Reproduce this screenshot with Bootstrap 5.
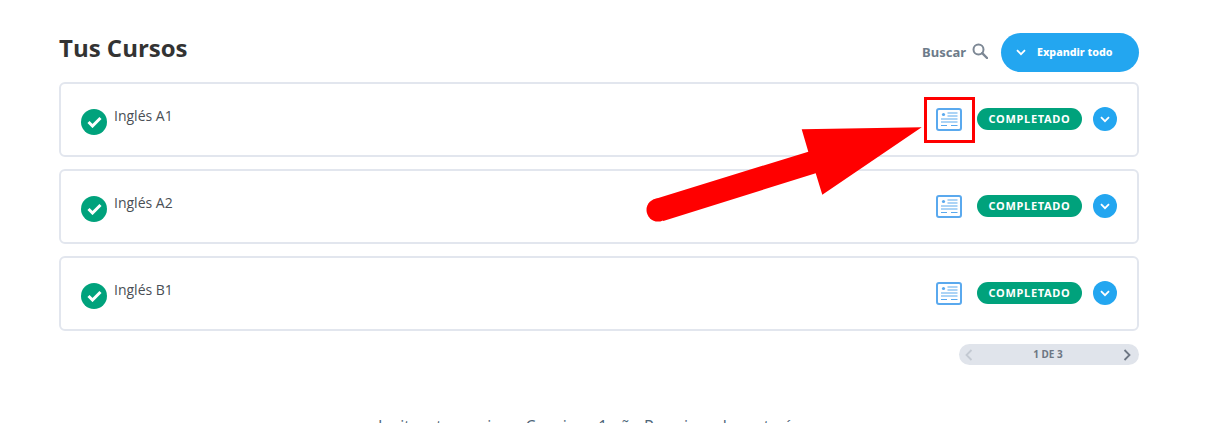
<!DOCTYPE html>
<html lang="es">
<head>
    <meta charset="UTF-8">
    <meta name="viewport" content="width=device-width, initial-scale=1.0">
    <title>Tus Cursos</title>
    <link href="https://cdn.jsdelivr.net/npm/bootstrap@5.3.0/dist/css/bootstrap.min.css" rel="stylesheet">
    <style>
        html, body {
            height: 423px;
            overflow: hidden;
        }

        body {
            background-color: #fff;
            font-family: "Open Sans", sans-serif;
            color: #4a4f55;
        }

        .page-wrap {
            width: 1080px;
            margin-left: 59px;
            padding-top: 33px;
        }

        .header-line {
            margin-bottom: 10px;
        }

        .courses-title {
            font-size: 24px;
            font-weight: 700;
            color: #333;
            line-height: 32px;
            margin: -1px 0 0;
        }

        .search-label {
            font-family: "Noto Sans", sans-serif;
            font-size: 13px;
            font-weight: 700;
            color: #6d7b8a;
        }

        .search-icon {
            margin: 0 13px 4px 6px;
        }

        .expand-btn {
            width: 138px;
            height: 39px;
            border: 0;
            border-radius: 20px;
            background-color: #23a6f0;
            color: #fff;
            font-family: "Noto Sans", sans-serif;
            font-size: 10.7px;
            font-weight: 800;
            padding: 0 0 0 15px;
        }

        .expand-btn svg {
            margin-right: 11px;
        }

        .course-row {
            height: 75px;
            border: 2px solid #e2e6ee;
            border-radius: 6px;
            padding: 0 20px;
        }

        .course-row + .course-row {
            margin-top: 12px;
        }

        .course-check {
            width: 26px;
            height: 26px;
            border-radius: 50%;
            background-color: #00a27c;
            margin-top: 5px;
        }

        .course-name {
            font-size: 14px;
            line-height: 20px;
            margin-left: 7px;
            margin-top: -7px;
        }

        .course-actions {
            margin-bottom: 1px;
        }

        .status-pill {
            width: 105px;
            height: 22px;
            border-radius: 11px;
            background-color: #00a27c;
            color: #fff;
            font-family: "Noto Sans", sans-serif;
            font-size: 11px;
            font-weight: 700;
            letter-spacing: .7px;
            margin-left: 15px;
        }

        .row-toggle {
            width: 24px;
            height: 24px;
            border-radius: 50%;
            background-color: #23a6f0;
            margin-left: 11px;
        }

        .pager-bar {
            width: 180px;
            height: 21px;
            border-radius: 11px;
            background-color: #e0e4eb;
            margin-top: 13px;
            padding: 0 8px 0 6px;
            font-family: "Noto Sans", sans-serif;
            font-size: 10px;
            font-weight: 700;
            color: #6d7683;
        }

        .footer-line {
            margin-top: 49px;
            font-size: 16px;
            line-height: 24px;
            color: #4d6478;
            text-align: center;
            white-space: nowrap;
        }

        .red-box {
            position: absolute;
            left: 924px;
            top: 97px;
            width: 51px;
            height: 46px;
            border: 3px solid #f00;
        }

        .red-arrow {
            position: absolute;
            left: 0;
            top: 0;
            pointer-events: none;
        }
    </style>
</head>
<body>
    <div class="page-wrap">
        <div class="d-flex align-items-start justify-content-between header-line">
            <h1 class="courses-title">Tus Cursos</h1>
            <div class="d-flex align-items-center">
                <span class="search-label">Buscar</span>
                <svg width="16" height="16" viewBox="0 0 16 16" fill="none" stroke="#7d8895" stroke-width="2" class="search-icon">
                    <circle cx="6.5" cy="6.5" r="5"/>
                    <path d="M10.2 10.2 15 15" stroke-linecap="round" stroke-width="2.4"/>
                </svg>
                <button class="expand-btn d-flex align-items-center" type="button">
                    <svg width="10" height="7" viewBox="0 0 10 7" fill="none" stroke="#fff" stroke-width="1.8">
                        <path d="M1 1.2 5 5.2 9 1.2"/>
                    </svg>
                    Expandir todo
                </button>
            </div>
        </div>

        <div class="course-row d-flex align-items-center justify-content-between">
            <div class="d-flex align-items-center">
                <div class="course-check d-flex align-items-center justify-content-center">
                    <svg width="15" height="12" viewBox="0 0 15 12" fill="none" stroke="#fff" stroke-width="3"><path d="M1.5 6 5.5 10 13.5 2"/></svg>
                </div>
                <span class="course-name">Inglés A1</span>
            </div>
            <div class="course-actions d-flex align-items-center">
                <svg width="26" height="23" viewBox="0 0 26 23" fill="none" stroke="#5aa9ee">
                    <rect x="1" y="1" width="24" height="21" rx="2" stroke-width="2"/>
                    <circle cx="7.5" cy="6.5" r="1.6" fill="#5aa9ee" stroke="none"/>
                    <path d="M11.5 5H21.5M11.5 8H21.5M5 11H21.5M5 14H21.5M5 17.5H11M15 17.5H21.5" stroke-width="1.2"/>
                </svg>
                <span class="status-pill d-flex align-items-center justify-content-center">COMPLETADO</span>
                <div class="row-toggle d-flex align-items-center justify-content-center">
                    <svg width="10" height="7" viewBox="0 0 10 7" fill="none" stroke="#fff" stroke-width="1.8"><path d="M1 1.2 5 5.2 9 1.2"/></svg>
                </div>
            </div>
        </div>

        <div class="course-row d-flex align-items-center justify-content-between">
            <div class="d-flex align-items-center">
                <div class="course-check d-flex align-items-center justify-content-center">
                    <svg width="15" height="12" viewBox="0 0 15 12" fill="none" stroke="#fff" stroke-width="3"><path d="M1.5 6 5.5 10 13.5 2"/></svg>
                </div>
                <span class="course-name">Inglés A2</span>
            </div>
            <div class="course-actions d-flex align-items-center">
                <svg width="26" height="23" viewBox="0 0 26 23" fill="none" stroke="#5aa9ee">
                    <rect x="1" y="1" width="24" height="21" rx="2" stroke-width="2"/>
                    <circle cx="7.5" cy="6.5" r="1.6" fill="#5aa9ee" stroke="none"/>
                    <path d="M11.5 5H21.5M11.5 8H21.5M5 11H21.5M5 14H21.5M5 17.5H11M15 17.5H21.5" stroke-width="1.2"/>
                </svg>
                <span class="status-pill d-flex align-items-center justify-content-center">COMPLETADO</span>
                <div class="row-toggle d-flex align-items-center justify-content-center">
                    <svg width="10" height="7" viewBox="0 0 10 7" fill="none" stroke="#fff" stroke-width="1.8"><path d="M1 1.2 5 5.2 9 1.2"/></svg>
                </div>
            </div>
        </div>

        <div class="course-row d-flex align-items-center justify-content-between">
            <div class="d-flex align-items-center">
                <div class="course-check d-flex align-items-center justify-content-center">
                    <svg width="15" height="12" viewBox="0 0 15 12" fill="none" stroke="#fff" stroke-width="3"><path d="M1.5 6 5.5 10 13.5 2"/></svg>
                </div>
                <span class="course-name">Inglés B1</span>
            </div>
            <div class="course-actions d-flex align-items-center">
                <svg width="26" height="23" viewBox="0 0 26 23" fill="none" stroke="#5aa9ee">
                    <rect x="1" y="1" width="24" height="21" rx="2" stroke-width="2"/>
                    <circle cx="7.5" cy="6.5" r="1.6" fill="#5aa9ee" stroke="none"/>
                    <path d="M11.5 5H21.5M11.5 8H21.5M5 11H21.5M5 14H21.5M5 17.5H11M15 17.5H21.5" stroke-width="1.2"/>
                </svg>
                <span class="status-pill d-flex align-items-center justify-content-center">COMPLETADO</span>
                <div class="row-toggle d-flex align-items-center justify-content-center">
                    <svg width="10" height="7" viewBox="0 0 10 7" fill="none" stroke="#fff" stroke-width="1.8"><path d="M1 1.2 5 5.2 9 1.2"/></svg>
                </div>
            </div>
        </div>

        <div class="d-flex justify-content-end">
            <div class="pager-bar d-flex align-items-center justify-content-between">
                <svg width="8" height="12" viewBox="0 0 8 12" fill="none" stroke="#c3c9d2" stroke-width="1.8"><path d="M6.5 1 1.5 6 6.5 11"/></svg>
                <span>1 DE 3</span>
                <svg width="8" height="12" viewBox="0 0 8 12" fill="none" stroke="#6d7683" stroke-width="1.8"><path d="M1.5 1 6.5 6 1.5 11"/></svg>
            </div>
        </div>

        <div class="footer-line">Invita a tus amigos. Consigue 1 año Premium de cortesía ya</div>
    </div>

    <!-- screenshot annotation -->
    <div class="red-box"></div>
    <svg class="red-arrow" width="1209" height="423" viewBox="0 0 1209 423">
        <polygon fill="#f00" points="921.7,127.3 801.7,129.3 808.3,151.7 655,199 663.3,221 815.7,173.3 822.3,194.7"/>
        <circle cx="658" cy="210" r="11.5" fill="#f00"/>
    </svg>

    <script src="https://cdn.jsdelivr.net/npm/bootstrap@5.3.0/dist/js/bootstrap.bundle.min.js"></script>
</body>
</html>
